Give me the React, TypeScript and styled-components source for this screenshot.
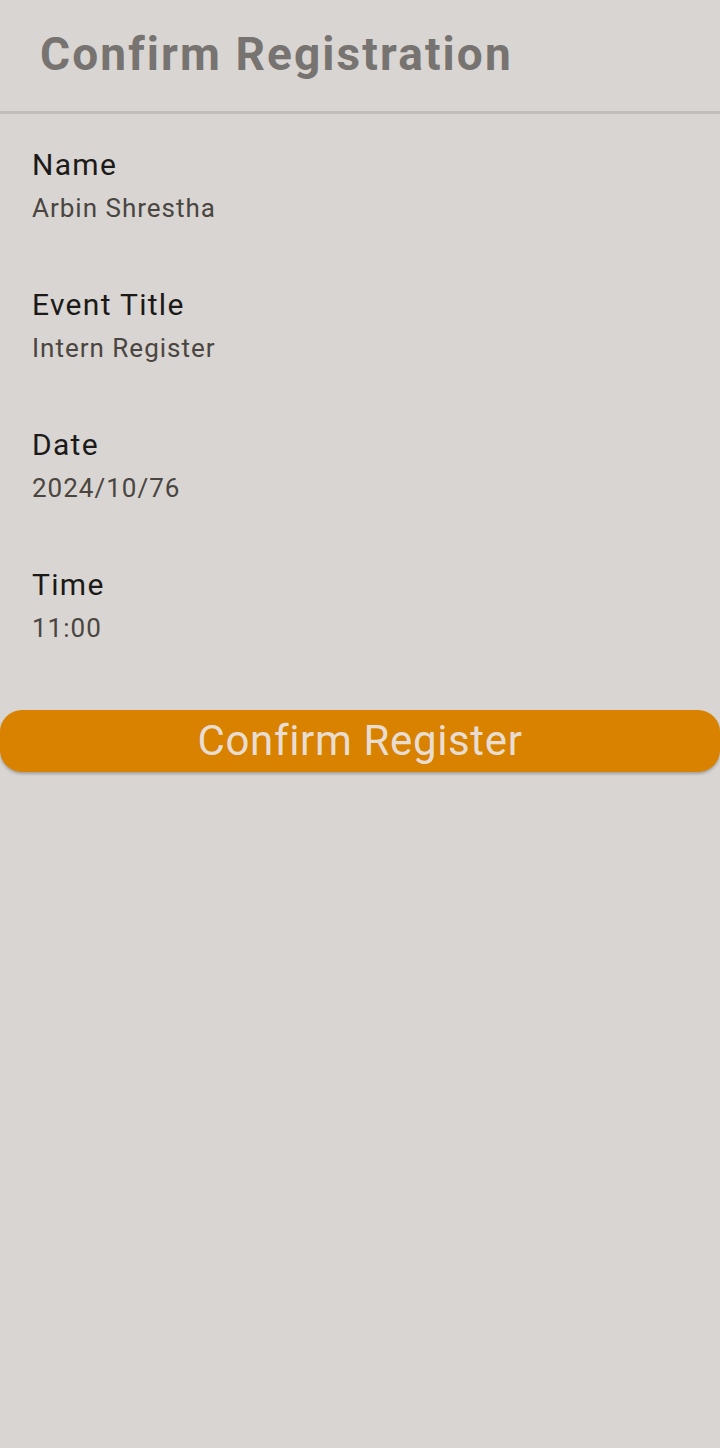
import React from "react";
import styled, { createGlobalStyle } from "styled-components";

const Global = createGlobalStyle`
  html, body { margin: 0; padding: 0; background: #d9d5d2; }
  body { font-family: Roboto, "Noto Sans", sans-serif; }
`;

const Page = styled.div`
  width: 720px;
  min-height: 1448px;
  background: #d9d5d2;
  display: flex;
  flex-direction: column;
`;

const AppBar = styled.header`
  height: 114px;
  box-sizing: border-box;
  padding: 26px 40px 0;
  border-bottom: 3px solid #c1bdb9;
`;

const Title = styled.h1`
  margin: 0;
  font-family: Roboto, sans-serif;
  font-weight: 700;
  font-size: 46px;
  line-height: 56px;
  letter-spacing: 2.1px;
  color: #767370;
`;

const Body = styled.main`
  display: flex;
  flex-direction: column;
  padding: 33px 0 0;
`;

const Field = styled.section`
  padding: 0 32px;
  height: 140px;
  display: flex;
  flex-direction: column;
`;

const Label = styled.div`
  font-size: 30px;
  line-height: 36px;
  letter-spacing: 1.3px;
  color: #1c1a18;
`;

const Value = styled.div`
  font-size: 26px;
  line-height: 32px;
  letter-spacing: 1px;
  color: #4a4541;
  margin-top: 9px;
`;

const Button = styled.button`
  margin-top: 3px;
  width: 720px;
  height: 62px;
  border: none;
  border-radius: 22px;
  background: #d98200;
  color: #e8ddd3;
  font-family: Roboto, sans-serif;
  font-size: 42px;
  line-height: 62px;
  letter-spacing: 0.65px;
  padding: 0;
  box-shadow: 0 2px 3px rgba(0,0,0,0.25);
`;

const fields = [
  ["Name", "Arbin Shrestha"],
  ["Event Title", "Intern Register"],
  ["Date", "2024/10/76"],
  ["Time", "11:00"],
];

export default function App() {
  return (
    <Page>
      <Global />
      <AppBar>
        <Title>Confirm Registration</Title>
      </AppBar>
      <Body>
        {fields.map(([l, v]) => (
          <Field key={l}>
            <Label>{l}</Label>
            <Value>{v}</Value>
          </Field>
        ))}
        <Button>Confirm Register</Button>
      </Body>
    </Page>
  );
}
